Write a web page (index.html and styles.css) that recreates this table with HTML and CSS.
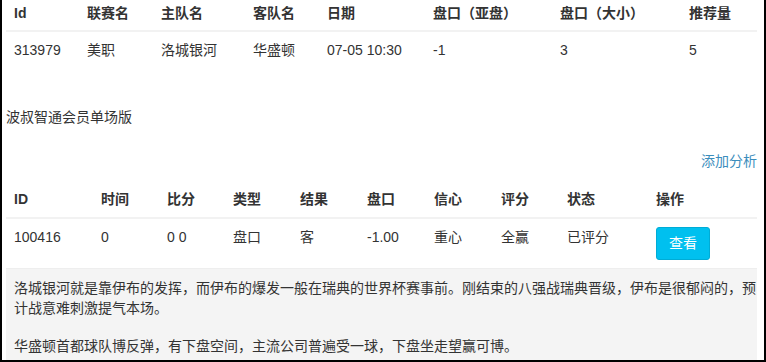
FILE: index.html
```html
<!DOCTYPE html>
<html lang="zh-CN">
<head>
<meta charset="utf-8">
<title>波叔智通会员单场版</title>
<link rel="stylesheet" href="styles.css">
</head>
<body>
<div class="frame">
  <table class="tbl tbl-match">
    <colgroup>
      <col class="c73"><col class="c74"><col class="c92"><col class="c74"><col class="c106"><col class="c127"><col class="c129"><col>
    </colgroup>
    <thead>
      <tr><th>Id</th><th>联赛名</th><th>主队名</th><th>客队名</th><th>日期</th><th>盘口（亚盘）</th><th>盘口（大小）</th><th>推荐量</th></tr>
    </thead>
    <tbody>
      <tr><td>313979</td><td>美职</td><td>洛城银河</td><td>华盛顿</td><td>07-05 10:30</td><td>-1</td><td>3</td><td>5</td></tr>
    </tbody>
  </table>

  <div class="title">波叔智通会员单场版</div>
  <div class="actions"><a class="link" href="#">添加分析</a></div>

  <table class="tbl tbl-analysis">
    <colgroup>
      <col class="c87"><col class="c66"><col class="c66"><col class="c67"><col class="c67"><col class="c67"><col class="c67"><col class="c66"><col class="c89"><col>
    </colgroup>
    <thead>
      <tr><th>ID</th><th>时间</th><th>比分</th><th>类型</th><th>结果</th><th>盘口</th><th>信心</th><th>评分</th><th>状态</th><th>操作</th></tr>
    </thead>
    <tbody>
      <tr><td>100416</td><td>0</td><td>0 0</td><td>盘口</td><td>客</td><td>-1.00</td><td>重心</td><td>全赢</td><td>已评分</td><td><button class="btn-info" type="button">查看</button></td></tr>
    </tbody>
  </table>

  <div class="analysis">
    <p>洛城银河就是靠伊布的发挥，而伊布的爆发一般在瑞典的世界杯赛事前。刚结束的八强战瑞典晋级，伊布是很郁闷的，预计战意难刺激提气本场。</p>
    <p>华盛顿首都球队博反弹，有下盘空间，主流公司普遍受一球，下盘坐走望赢可博。</p>
  </div>
</div>
</body>
</html>
```

FILE: styles.css
```css
* { box-sizing: border-box; }

html, body {
  margin: 0;
  padding: 0;
  background: #fff;
}

body {
  font-family: "Liberation Sans", "Noto Sans CJK SC", sans-serif;
  font-size: 14px;
  line-height: 20px;
  color: #333;
}

.frame {
  width: 766px;
  height: 362px;
  border: 2px solid #000;
  border-top: none;
  padding: 0 7px 0 4px;
  overflow: hidden;
}

.tbl {
  width: 100%;
  border-collapse: collapse;
  table-layout: fixed;
}

.tbl th,
.tbl td {
  text-align: left;
  vertical-align: top;
  padding: 8px;
  white-space: nowrap;
}

.tbl th {
  font-weight: bold;
  color: #333;
  border-bottom: 2px solid #f2f2f2;
}

.tbl-match th { padding: 3px 8px 7px; }

.tbl-analysis tbody td { border-bottom: 1px solid #eeeeee; }

.c66 { width: 66px; }
.c67 { width: 67px; }
.c73 { width: 73px; }
.c74 { width: 74px; }
.c87 { width: 87px; }
.c89 { width: 89px; }
.c92 { width: 92px; }
.c106 { width: 106px; }
.c127 { width: 127px; }
.c129 { width: 129px; }

.title {
  margin-top: 39px;
}

.actions {
  margin-top: 24px;
  text-align: right;
}

.link {
  color: #3c8dbc;
  text-decoration: none;
}

.tbl-analysis { margin-top: 10px; }

.btn-info {
  font-family: inherit;
  font-size: 14px;
  line-height: 20px;
  color: #fff;
  background: #00c0ef;
  border: 1px solid #00acd6;
  border-radius: 3px;
  padding: 5px 12px 6px;
  cursor: pointer;
}

.analysis {
  background: #f4f4f4;
  padding: 9px 0 10px 8px;
  height: 100%;
}

.analysis p {
  margin: 0 0 18px;
}
```
